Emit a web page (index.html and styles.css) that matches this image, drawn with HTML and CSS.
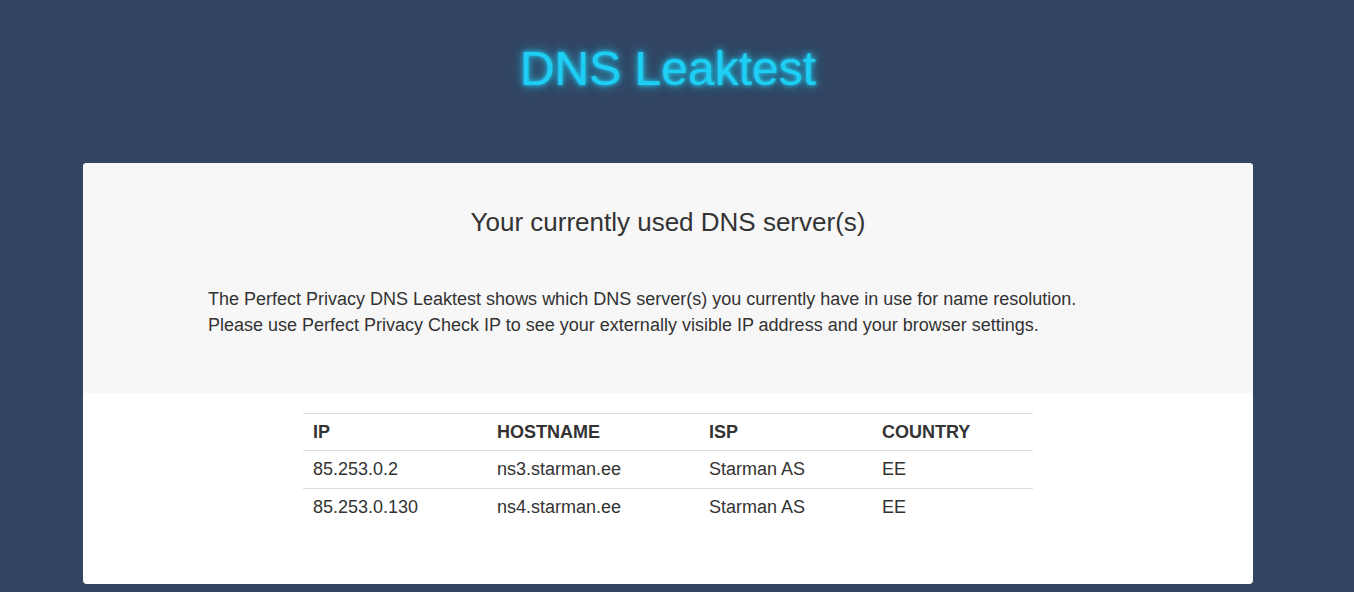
FILE: index.html
```html
<!DOCTYPE html>
<html lang="en">
<head>
<meta charset="utf-8">
<title>DNS Leaktest</title>
<link rel="stylesheet" href="styles.css">
</head>
<body>
<header class="site-header">
  <h1 class="site-title">DNS Leaktest</h1>
</header>
<main class="card">
  <section class="intro">
    <h2 class="intro-title">Your currently used DNS server(s)</h2>
    <p class="intro-text">The Perfect Privacy DNS Leaktest shows which DNS server(s) you currently have in use for name resolution.<br>Please use Perfect Privacy Check IP to see your externally visible IP address and your browser settings.</p>
  </section>
  <section class="results">
    <table class="dns-table">
      <thead>
        <tr><th class="col-ip">IP</th><th class="col-host">HOSTNAME</th><th class="col-isp">ISP</th><th class="col-country">COUNTRY</th></tr>
      </thead>
      <tbody>
        <tr><td>85.253.0.2</td><td>ns3.starman.ee</td><td>Starman AS</td><td>EE</td></tr>
        <tr><td>85.253.0.130</td><td>ns4.starman.ee</td><td>Starman AS</td><td>EE</td></tr>
      </tbody>
    </table>
  </section>
</main>
</body>
</html>
```

FILE: styles.css
```css
html, body {
  margin: 0;
  padding: 0;
}
body {
  background: #324664;
  font-family: "Liberation Sans", Arial, sans-serif;
  color: #333;
  min-height: 592px;
  padding-right: 18px;
}
.site-header {
  height: 163px;
  display: flex;
  justify-content: center;
}
.site-title {
  margin: 39px 0 0;
  font-size: 48px;
  font-weight: normal;
  line-height: 60px;
  color: #1ecff5;
  text-shadow: 0 0 4px #1ecff5, 0 0 10px rgba(30, 207, 245, 0.6), 0 0 14px rgba(30, 207, 245, 0.3);
}
.card {
  width: 1170px;
  margin: 0 auto;
  background: #fff;
  border-radius: 4px;
  overflow: hidden;
  height: 421px;
}
.intro {
  background: #f7f7f7;
  height: 230px;
  box-sizing: border-box;
  padding: 42px 125px 0;
}
.intro-title {
  margin: 0;
  text-align: center;
  font-size: 26px;
  font-weight: normal;
  line-height: 34px;
}
.intro-text {
  margin: 47px 0 0;
  font-size: 18px;
  line-height: 26px;
}
.results {
  padding-top: 20px;
  display: flex;
  justify-content: center;
}
.dns-table {
  width: 730px;
  border-collapse: collapse;
  font-size: 18px;
}
.dns-table th, .dns-table td {
  text-align: left;
  padding: 0 10px;
  height: 37px;
  border-top: 1px solid #ddd;
}
.dns-table th {
  font-weight: bold;
  height: 36px;
}
.col-ip { width: 164px; }
.col-host { width: 192px; }
.col-isp { width: 153px; }
```
